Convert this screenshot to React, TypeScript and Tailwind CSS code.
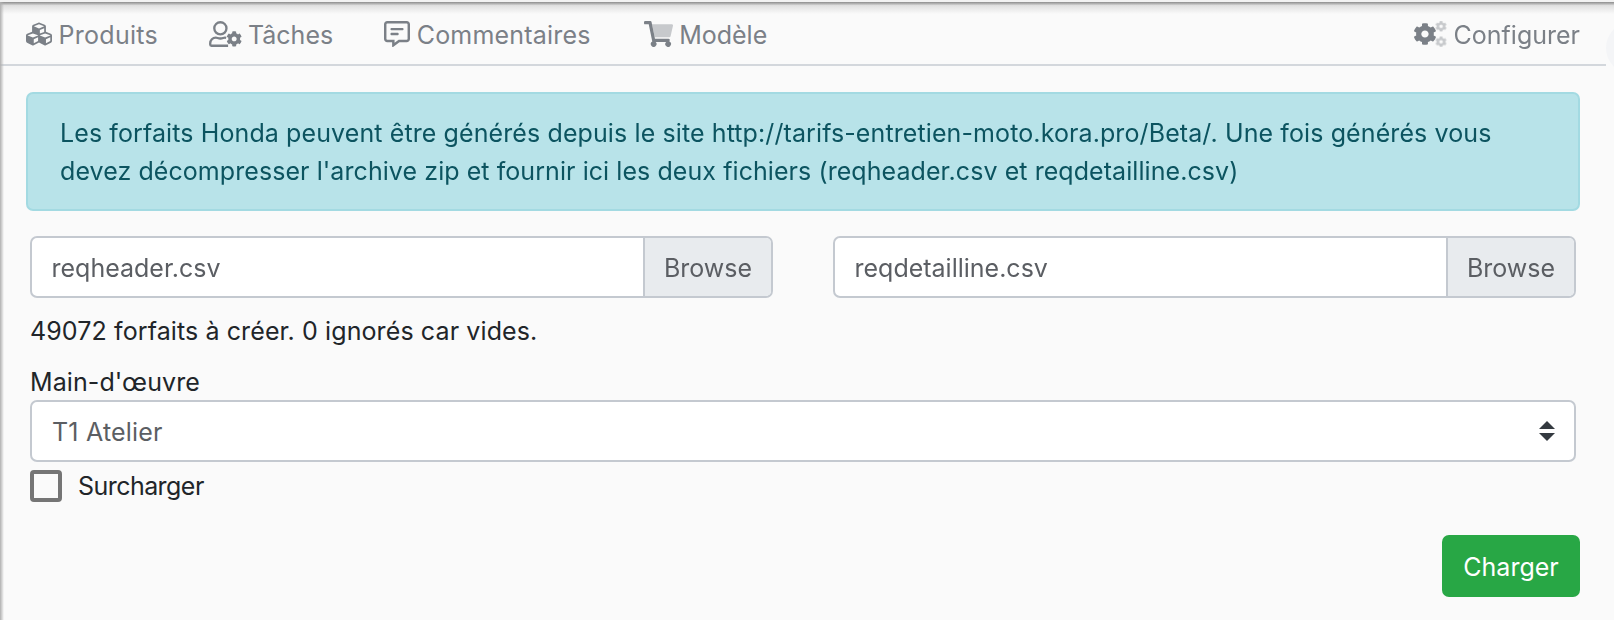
import type { ReactNode } from "react";
import { FaCubes } from "react-icons/fa";

const GEAR =
  "M610.5 373.3c2.6-14.1 2.6-28.5 0-42.6l25.8-14.9c3-1.7 4.3-5.2 3.3-8.5-6.7-21.6-18.2-41.2-33.2-57.4-2.3-2.5-6-3.1-9-1.4l-25.8 14.9c-10.9-9.3-23.4-16.5-36.9-21.3v-29.8c0-3.4-2.4-6.4-5.7-7.1-22.3-5-45-4.8-66.2 0-3.3.7-5.7 3.7-5.7 7.1v29.8c-13.5 4.8-26 12-36.9 21.3l-25.8-14.9c-2.9-1.7-6.7-1.1-9 1.4-15 16.2-26.5 35.8-33.2 57.4-1 3.3.4 6.8 3.3 8.5l25.8 14.9c-2.6 14.1-2.6 28.5 0 42.6l-25.8 14.9c-3 1.7-4.3 5.2-3.3 8.5 6.7 21.6 18.2 41.1 33.2 57.4 2.3 2.5 6 3.1 9 1.4l25.8-14.9c10.9 9.3 23.4 16.5 36.9 21.3v29.8c0 3.4 2.4 6.4 5.7 7.1 22.3 5 45 4.8 66.2 0 3.3-.7 5.7-3.7 5.7-7.1v-29.8c13.5-4.8 26-12 36.9-21.3l25.8 14.9c2.9 1.7 6.7 1.1 9-1.4 15-16.2 26.5-35.8 33.2-57.4 1-3.3-.4-6.8-3.3-8.5l-25.8-14.9zM496 400.5c-26.8 0-48.5-21.8-48.5-48.5s21.8-48.5 48.5-48.5 48.5 21.8 48.5 48.5-21.7 48.5-48.5 48.5z";

function UserCogIcon() {
  return (
    <svg viewBox="0 0 640 512" className="h-[26px] w-[32.5px] shrink-0 overflow-visible" fill="currentColor">
      <circle cx="224" cy="144" r="120" fill="none" stroke="currentColor" strokeWidth="46" />
      <path
        d="M376 488H48a24 24 0 0 1-24-24v-25.600C24 377.400 73.400 328 134.400 328c29 0 43 16 89.600 16s60-16 90-16q14 0 24 3"
        fill="none"
        stroke="currentColor"
        strokeWidth="46"
      />
      <path d={GEAR} />
    </svg>
  );
}

function CommentIcon() {
  return (
    <svg viewBox="0 0 512 512" className="h-[26px] w-[26px] shrink-0" fill="currentColor">
      <path d="M448 0H64C28.700 0 0 28.700 0 64v288c0 35.300 28.700 64 64 64h96v84c0 7.100 5.800 12 12 12 2.400 0 4.900-.7 7.100-2.400L304 416h144c35.300 0 64-28.700 64-64V64c0-35.300-28.700-64-64-64zm16 352c0 8.800-7.200 16-16 16H288l-12.800 9.600L208 428v-60H64c-8.800 0-16-7.200-16-16V64c0-8.800 7.200-16 16-16h384c8.800 0 16 7.200 16 16v288zm-96-216H144c-8.800 0-16 7.200-16 16v16c0 8.800 7.200 16 16 16h224c8.800 0 16-7.200 16-16v-16c0-8.800-7.200-16-16-16zm-96 96H144c-8.800 0-16 7.200-16 16v16c0 8.800 7.200 16 16 16h128c8.800 0 16-7.200 16-16v-16c0-8.800-7.200-16-16-16z" />
    </svg>
  );
}

function CartIcon() {
  return (
    <svg viewBox="0 0 576 512" className="ml-[2px] h-[26px] w-[29px] shrink-0" fill="currentColor">
      <path opacity=".4" d="M552 64H159.200l52.400 256h293.100a24 24 0 0 0 23.400-18.680l47.270-208A24 24 0 0 0 552 64z" />
      <path d="M218.120 352h268.420a24 24 0 0 1 23.400 29.320l-5.520 24.280a56 56 0 1 1-63.600 10.400H231.170a56 56 0 1 1-67.050-8.570L93.880 64H24A24 24 0 0 1 0 40V24A24 24 0 0 1 24 0h102.530A24 24 0 0 1 150 19.190z" />
    </svg>
  );
}

function CogsIcon() {
  return (
    <svg viewBox="0 0 640 512" className="mr-px h-[26px] w-[32.5px] shrink-0 overflow-visible" fill="currentColor">
      <path d={GEAR} transform="translate(216 256) scale(1.5 1.42) translate(-496 -352)" />
      <g opacity=".4">
        <path d={GEAR} transform="translate(532 104) scale(.74 .68) translate(-496 -352)" />
        <path d={GEAR} transform="translate(532 408) scale(.74 .68) translate(-496 -352)" />
      </g>
    </svg>
  );
}

function NavItem({ icon, className = "", children }: { icon: ReactNode; className?: string; children: ReactNode }) {
  return (
    <a className="flex items-center gap-[6.5px]">
      {icon}
      <span className={`pt-[2px] ${className}`}>{children}</span>
    </a>
  );
}

function FileInput({ name }: { name: string }) {
  return (
    <div className="flex h-[62px] w-[743px] overflow-hidden rounded-[7px] border-2 border-[#c4c9d0] bg-white text-[#5b5e63]">
      <span className="flex flex-1 items-center pt-[2px] pl-[19.5px]">{name}</span>
      <span className="flex w-[128px] items-center justify-center border-l-2 border-[#c4c9d0] bg-[#e8ebee] pt-[2px]">Browse</span>
    </div>
  );
}

export default function App() {
  return (
    <div className="relative h-[620px] w-[1614px] overflow-hidden bg-[#fafafa] font-['Inter',sans-serif] text-[25px] leading-[38px] text-[#212529]">
      <header className="flex h-[66px] w-[1606px] items-center border-b-2 border-[#d3d7dc] pt-1 pr-[26px] pl-[26px] text-[#7b8087]">
        <nav className="flex flex-1 gap-[51px]">
          <NavItem icon={<FaCubes className="size-[26px] shrink-0" />} className="tracking-[0.28px]">Produits</NavItem>
          <NavItem icon={<UserCogIcon />}>Tâches</NavItem>
          <NavItem icon={<CommentIcon />} className="tracking-[0.2px]">Commentaires</NavItem>
          <NavItem icon={<CartIcon />}>Modèle</NavItem>
        </nav>
        <NavItem icon={<CogsIcon />}>Configurer</NavItem>
      </header>

      <main className="pr-[34px] pl-[26px] pt-[26px]">
        <div className="h-[119px] rounded-[7px] border-2 border-[#a3dae2] bg-[#b8e3e9] pt-[20px] pl-8 whitespace-nowrap text-[#0c5460]">
          <p className="tracking-[0.105px]">Les forfaits Honda peuvent être générés depuis le site http://tarifs-entretien-moto.kora.pro/Beta/. Une fois générés vous</p>
          <p className="tracking-[0.07px]">devez décompresser l'archive zip et fournir ici les deux fichiers (reqheader.csv et reqdetailline.csv)</p>
        </div>
        <div className="px-1">
          <div className="mt-[25px] flex justify-between">
            <FileInput name="reqheader.csv" />
            <FileInput name="reqdetailline.csv" />
          </div>
          <p className="mt-[14px] tracking-[0.11px]">49072 forfaits à créer. 0 ignorés car vides.</p>
          <label className="mt-[13px] block h-[37px] tracking-[0.1px]">Main-d'œuvre</label>
          <div className="flex h-[62px] items-center justify-between rounded-[7px] border-2 border-[#c4c9d0] bg-white pr-[19px] pl-5 text-[#5b5e63]">
            <span className="pt-[2px] tracking-[0.2px]">T1 Atelier</span>
            <svg viewBox="0 0 16 20" className="h-5 w-4" fill="#343a40">
              <path d="M8 0l8 8H0zM0 12h16l-8 8z" />
            </svg>
          </div>
          <div className="mt-2 flex h-8 items-center gap-[16px]">
            <span className="size-8 rounded-[4px] border-4 border-[#757575]" />
            <span className="tracking-[-0.55px]">Surcharger</span>
          </div>
        </div>
        <div className="mt-[33px] flex justify-end">
          <button className="h-[62px] w-[138px] rounded-[7px] bg-[#28a745] pt-[2px] text-white">Charger</button>
        </div>
      </main>

      <div className="absolute inset-x-0 top-0 h-[2px] bg-[#f2f2f2]" />
      <div className="absolute inset-x-0 top-[2px] h-[12px] bg-linear-to-b from-[#8c8c8c] via-[#e0e0e0] via-30% to-transparent" />
      <div className="absolute top-[2px] bottom-0 left-0 w-1 bg-linear-to-r from-[#b0b0b0] to-transparent" />
      <div className="absolute top-[22px] left-[1606px] size-[52px] rounded-full bg-[#f4f5f7]" />
    </div>
  );
}
